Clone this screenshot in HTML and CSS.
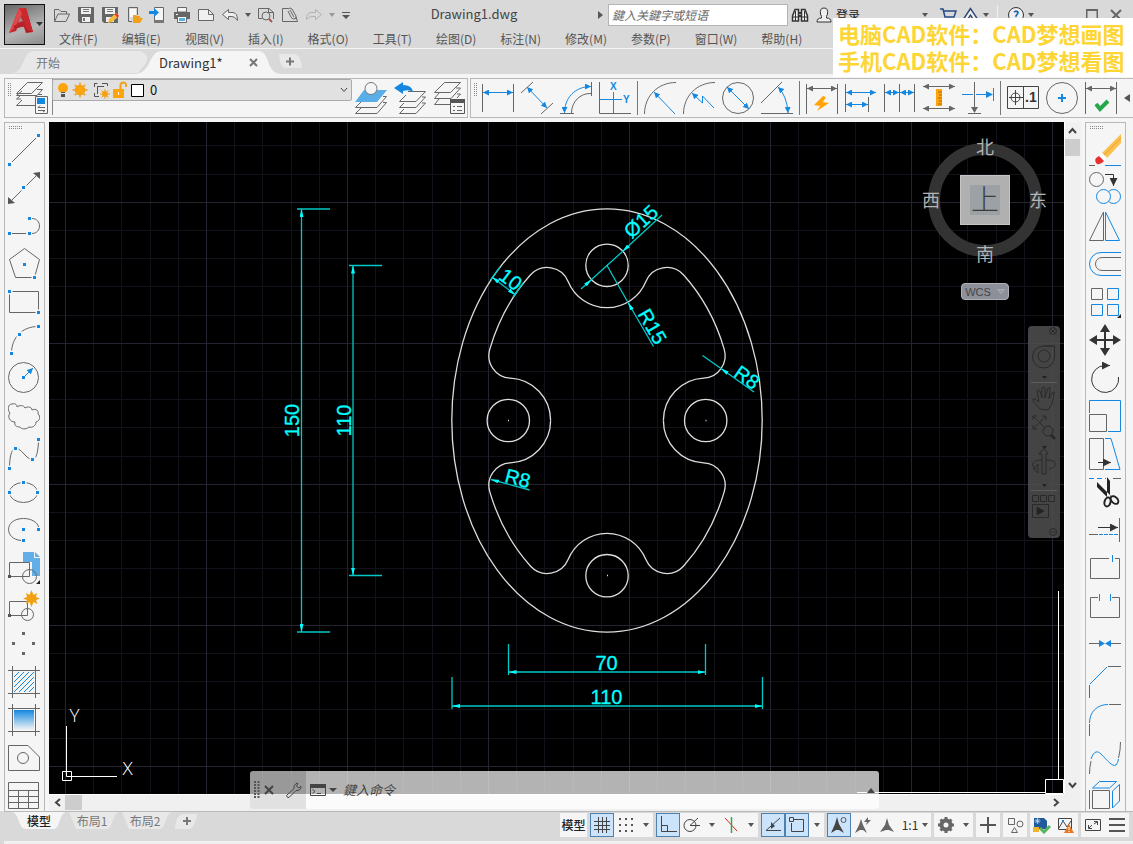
FILE: index.html
```html
<!DOCTYPE html>
<html lang="zh-CN">
<head>
<meta charset="utf-8">
<meta name="viewport" content="width=device-width, initial-scale=1">
<title>Drawing1.dwg</title>
<link rel="stylesheet" href="styles.css">
</head>
<body>
<svg class="defs" aria-hidden="true">
  <defs>
    <marker id="ab" viewBox="0 0 6 6" refX="6" refY="3" markerWidth="6" markerHeight="6" markerUnits="userSpaceOnUse" orient="auto-start-reverse"><path d="M0 0L6 3L0 6z" fill="#1488e0"/></marker>
    <marker id="ag" viewBox="0 0 6 6" refX="6" refY="3" markerWidth="6" markerHeight="6" markerUnits="userSpaceOnUse" orient="auto-start-reverse"><path d="M0 0L6 3L0 6z" fill="#666"/></marker>
    <marker id="ak" viewBox="0 0 8 8" refX="8" refY="4" markerWidth="8" markerHeight="8" markerUnits="userSpaceOnUse" orient="auto-start-reverse"><path d="M0 0L8 4L0 8z" fill="#333"/></marker>
    <marker id="ac" viewBox="0 0 8 4" refX="8" refY="2" markerWidth="8" markerHeight="4" markerUnits="userSpaceOnUse" orient="auto-start-reverse"><path d="M0 0L8 2L0 4z" fill="#0ff"/></marker>
    <linearGradient id="fade" x1="0" y1="0" x2="0" y2="1"><stop offset="0" stop-color="#1488e0"/><stop offset="1" stop-color="#f5f5f5"/></linearGradient>
    <linearGradient id="red" x1="0" y1="0" x2="1" y2="1"><stop offset="0" stop-color="#e0363b"/><stop offset="1" stop-color="#a8161c"/></linearGradient>
    <pattern id="grid" x="65" y="202" width="141" height="141" patternUnits="userSpaceOnUse">
      <path class="minor" d="M28.500 0V141M56.500 0V141M85.500 0V141M113.500 0V141M0 28.500H141M0 56.500H141M0 84.500H141M0 113.500H141"/>
      <path class="major" d="M.500 0V141M0 .500H141"/>
    </pattern>
  </defs>
</svg>

<div class="app">
  <header class="header">
    <button class="logo" aria-label="应用程序菜单">
      <svg width="39" height="39" viewBox="0 0 39 39">
        <path d="M4 28L14 3H21L28 27L21 28L19 22L13 21L11 26Z" fill="url(#red)"/>
        <path d="M14 3L17 9L10 22L4 28Z" fill="#e0484c"/>
        <path d="M8 21L23 15L25 19L10 24Z" fill="#b82328"/>
        <path d="M17 9L21 3L28 27L22 25Z" fill="#c9282d"/>
        <path d="M15.500 12L13 17.500L18 16Z" fill="#9a8a8a"/>
        <path d="M31 17H38L34.500 21Z" fill="#333"/>
      </svg>
    </button>
    <div class="header-rows">
      <div class="title-row">
        <div class="quick">
          <button aria-label="打开"><svg width="18" height="18"><path class="g" d="M1.500 15.500V3.500H6L8 5.500H13.500V8M1.500 15.500L5 8H16.500L13 15.500Z"/></svg></button>
          <button aria-label="保存"><svg width="18" height="18"><path d="M1 1H17V17H3L1 15Z" fill="#666"/><path d="M4 2H14V8H4ZM5 11H13V16H5Z" fill="#eee"/><path d="M6 3H12V4H6ZM6 5H12V6H6ZM6 12H8V15H6Z" fill="#777"/></svg></button>
          <button aria-label="另存为"><svg width="18" height="18"><path d="M1 1H17V17H3L1 15Z" fill="#666"/><path d="M4 2H14V8H4ZM5 11H13V16H5Z" fill="#eee"/><path d="M6 3H12V4H6ZM6 5H12V6H6Z" fill="#777"/><path d="M7 17L8 13L15 7L18 10L11 16Z" fill="#f5b93b"/><path d="M13.500 8.500L15 7L18 10L16.500 11.500Z" fill="#e33"/></svg></button>
          <button aria-label="从云端打开"><svg width="18" height="18"><path class="g" d="M3.500 15.500V1.500H12.500V9M3.500 15.500H7"/><path d="M5 3H11V11H5Z" fill="#f8f8f8"/><path d="M8 17V9H11L12 10H15V12H18L15 17Z" fill="#f0a01a"/></svg></button>
          <button aria-label="保存到云端"><svg width="18" height="18"><path d="M5.500 1.500H14.500V16.500H5.500Z" fill="#f5f5f5" stroke="#666"/><path d="M5 14H15V17H5Z" fill="#777"/><path d="M0 5H5V2L10 6.500L5 11V8H0Z" fill="#1488e0"/></svg></button>
          <button aria-label="打印"><svg width="18" height="18"><path d="M4.500 1.500H13.500V6H4.500Z" fill="#f5f5f5" stroke="#666"/><path d="M1 6H17V13H1Z" fill="#666"/><path d="M3 8H5V9H3Z" fill="#fff"/><path d="M4.500 10.500H13.500V16.500H4.500Z" fill="#fff" stroke="#666"/><path d="M6 12H12V15H6Z" fill="#5aaee8"/></svg></button>
          <button aria-label="新建"><svg width="18" height="18"><path d="M1.500 3.500H11.500L16.500 8.500V14.500H1.500Z" fill="#f0f0f0" stroke="#666"/><path class="g" d="M11.500 3.500V8.500H16.500"/></svg></button>
          <button aria-label="放弃"><svg width="18" height="18"><path d="M1.500 8.500L7.500 3.500V6.500H12Q16.500 7 16.500 14.500Q14 10.500 11 10.500H7.500V13.500Z" fill="#eee" stroke="#666"/></svg></button>
          <button class="thin" aria-label="放弃列表"><i class="caret"></i></button>
          <button aria-label="打印预览"><svg width="18" height="18"><path class="g" d="M1.500 12.500V2.500H12L16.500 6.500V13M1.500 12.500H5M11.500 2.500V6.500H16.500"/><circle class="g" cx="9" cy="10" r="4"/><path d="M12 13L15 16" stroke="#a54" stroke-width="2"/></svg></button>
          <button aria-label="发布"><svg width="18" height="18"><path class="g" d="M7 2.500H1.500V15.500H11M5 15.500H16.500L15 11M7 3Q9 1 11 3L15 10Q16 13 13 13Q11 13 10 11L7 5"/><path class="g" d="M9 4L13 11"/></svg></button>
          <button aria-label="重做" disabled><svg width="18" height="18"><path d="M16.500 8.500L10.500 3.500V6.500H6Q1.500 7 1.500 13.500Q4 10.500 7 10.500H10.500V13.500Z" fill="none" stroke="#b2b2b2"/></svg></button>
          <button class="thin" aria-label="重做列表"><i class="caret pale"></i></button>
          <button class="custom" aria-label="自定义快速访问工具栏"><svg width="10" height="8"><path d="M1 1.500H9" stroke="#555"/><path d="M1 4H9L5 8Z" fill="#555"/></svg></button>
        </div>
        <div class="doc-title">Drawing1.dwg</div>
        <div class="info">
          <button class="expand" aria-label="展开"><svg width="5" height="8"><path d="M0 0L5 4L0 8Z" fill="#555"/></svg></button>
          <input class="search" type="text" aria-label="搜索" placeholder="鍵入关鍵字或短语">
          <button aria-label="查找"><svg width="18" height="16"><path d="M1.500 14V9L4 2.500H7.500V14ZM16.500 14V9L14 2.500H10.500V14Z" fill="#eee" stroke="#333" stroke-width="1.500"/><path d="M7 6H11M7 9H11" stroke="#333" stroke-width="2"/><path d="M2 10H7M11 10H16M4.500 4V14M13.500 4V14" stroke="#333"/></svg></button>
          <button class="signin"><svg width="16" height="16"><path d="M1 15Q1 11 5.500 11Q6 10 4.500 7Q3.500 1 8 1Q12.500 1 11.500 7Q10 10 10.500 11Q15 11 15 15Z" fill="#eee" stroke="#333"/></svg><span>登录</span></button>
          <i class="caret login-caret"></i>
          <button class="cart" aria-label="商店"><svg width="18" height="16"><path d="M1 2H4L6 10H15L17 4H5M6 12H15" fill="none" stroke="#234a86" stroke-width="1.500"/></svg></button>
          <button class="apps" aria-label="应用"><svg width="17" height="16"><path d="M8.500 1.500L1.500 12H6L8.500 8L11 12H15.500Z" fill="#eee" stroke="#29456f" stroke-width="1.400"/></svg></button>
          <i class="caret"></i><i class="bar"></i>
          <button class="help" aria-label="帮助"><span>?</span></button><i class="caret"></i>
          <button class="win" aria-label="最大化"><svg width="12" height="12"><path class="g thick" d="M.500 1H11.500V12H.500Z"/></svg></button>
          <button class="win" aria-label="关闭"><svg width="12" height="12"><path class="g thick" d="M1 1L11 11M11 1L1 11"/></svg></button>
        </div>
      </div>
      <nav class="menu">
        <button>文件(F)</button><button>编辑(E)</button><button>视图(V)</button><button>插入(I)</button><button>格式(O)</button><button>工具(T)</button><button>绘图(D)</button><button>标注(N)</button><button>修改(M)</button><button>参数(P)</button><button>窗口(W)</button><button>帮助(H)</button>
      </nav>
    </div>
  </header>

  <div class="file-tabs">
    <button class="file-tab start"><svg class="tab-shape" viewBox="0 0 136 23" preserveAspectRatio="none"><path d="M0 22C13 22 10 0 22 0H128Q138 3 134 12L126 22Z" fill="#e8e8e8"/></svg><span>开始</span></button>
    <button class="file-tab current"><svg class="tab-shape" viewBox="0 0 148 23" preserveAspectRatio="none"><path d="M0 23C18 23 14 0 28 0H124C137 0 131 23 148 23Z" fill="#f5f5f5"/></svg><span>Drawing1*</span><svg class="tab-close" width="9" height="9"><path d="M1 1L8 8M8 1L1 8" stroke="#777" stroke-width="2"/></svg></button>
    <button class="tab-add" aria-label="新图形"><svg width="24" height="16" viewBox="0 0 24 16"><path d="M1 0H15Q23 0 24 14H7Q2 13 1 0Z" fill="#e8e8e8"/><path d="M8 7.500H16M12 3.500V11.500" stroke="#777" stroke-width="2"/></svg></button>
  </div>

  <div class="toolbars">
    <div class="toolbar layers">
      <i class="grip"></i>
      <button aria-label="图层特性"><svg class="ic"><path class="g" d="M11.500 .500H26.500L15.500 11.500H.500ZM21 7.500H26.500L21 13.500H.500L6 9M22 12.500H26M5 17H.500L4.500 13.500M.500 23.500L6 18M.500 23.500H19"/><path d="M19.500 14.500H31.500V31.500H19.500Z" fill="#f5f5f5" stroke="#666"/><path d="M21 16H29V22H21Z" fill="#1488e0"/><path class="g" d="M22 25.500H29M22 28.500H29M24 23.500L22 25.500M27 30L29 28.500"/></svg></button>
      <div class="layer-col">
        <div class="layer-box">
          <select aria-label="图层"><option>0</option></select>
          <svg class="layer-icons" width="90" height="18" viewBox="0 0 90 18">
            <circle cx="7" cy="7" r="5" fill="#ffa50a"/><path d="M5 11H9V12H5ZM5 13H9V16H5Z" fill="#555"/>
            <g stroke="#f0a01a" stroke-width="1.500"><circle cx="24" cy="9" r="4.500" fill="#ffa50a"/><path d="M24 1.500V4M24 14V16.500M16.500 9H19M29 9H31.500M18.700 3.700L20.500 5.500M27.500 12.500L29.300 14.300M29.300 3.700L27.500 5.500M20.500 12.500L18.700 14.300"/></g>
            <path d="M41.500 2.500H39M38.500 2V6M38.500 12V15.500H43M46 2.500H51.500V5M41.500 5.500H48M41.500 5V13" fill="none" stroke="#555"/><circle cx="49" cy="13" r="3" fill="#ffa50a"/><path d="M49 8V18M44 13H54M45.500 9.500L52.500 16.500M52.500 9.500L45.500 16.500" stroke="#f0a01a"/>
            <path d="M57 8H68V17H57Z" fill="#ffa50a"/><path d="M64.500 8V4.500Q64.500 1.500 67.500 1.500Q70.500 1.500 70 6" fill="none" stroke="#f0a01a" stroke-width="2"/><path d="M62.500 11V14" stroke="#fff"/>
            <path d="M75.500 3.500H87.500V15.500H75.500Z" fill="#fff" stroke="#000"/>
          </svg>
          <svg class="chev" width="8" height="6"><path d="M1 1L4 4.500L7 1" fill="none" stroke="#444"/></svg>
        </div>
      </div>
      <button aria-label="置为当前"><svg class="ic"><path d="M9 8H32L22 20H0Z" fill="#5aaee8"/><circle cx="16" cy="6.500" r="6" fill="#f5f5f5" stroke="#777"/><path class="g" d="M28 14.500H31.500L22 25.500H.500L6 20M28 20.500H31.500L22 31.500H.500L6 26"/></svg></button>
      <button aria-label="上一个图层"><svg class="ic"><path class="g" d="M14 9.500H31.500L22 19.500H5.500L12 13M28 15H31.500L22 25.500H5.500L10 21M28 21H31.500L22 31.500H5.500L10 27"/><path d="M0 6L9 0V3Q18 3 19 10Q15 7 9 9V12Z" fill="#1488e0"/></svg></button>
      <button aria-label="图层状态"><svg class="ic"><path class="g" d="M11.500 .500H27.500L17.500 10.500H1.500ZM23 6H27.500L18 16.500H1.500L6 11M24 12H27.500L24 16M1.500 22.500H17M1.500 22.500L6 17"/><path d="M17.500 17.500H31.500V31.500H17.500Z" fill="#f5f5f5" stroke="#555"/><path d="M17 17H32V21H17Z" fill="#555"/><path class="g" d="M20 24.500H22M24 24.500H29M20 28.500H22M24 28.500H29"/></svg></button>
    </div>
    <div class="toolbar dims">
      <i class="grip"></i>
      <button aria-label="线性"><svg class="ic"><path class="g" d="M.500 2V30M31.500 2V30"/><path class="b" marker-start="url(#ab)" marker-end="url(#ab)" d="M1 10.500H31"/></svg></button>
      <button aria-label="对齐"><svg class="ic"><path class="g" d="M0 11L12 0M20 32L32 21"/><path class="b" marker-start="url(#ab)" marker-end="url(#ab)" d="M6 5L26 26"/></svg></button>
      <button aria-label="弧长"><svg class="ic"><path class="g" d="M11.500 31C11.500 20 20 11 31 11.500M0 31.500H14M31.500 0V14"/><path class="b" marker-start="url(#ab)" marker-end="url(#ab)" d="M4.500 31C4.500 17 14 4.500 31 4.500"/></svg></button>
      <button aria-label="坐标"><svg class="ic"><path class="g" d="M.500 0V31.500H32"/><path class="b" d="M0 17.500H23M14.500 10V31"/><text class="xy" x="11" y="8">X</text><text class="xy" x="24" y="21">Y</text></svg></button>
      <i class="sep"></i>
      <button aria-label="半径"><svg class="ic"><path class="g" d="M.500 32C.500 14 14 .500 32 .500"/><path class="b" marker-start="url(#ab)" d="M10 10L31 32"/></svg></button>
      <button aria-label="折弯"><svg class="ic"><path class="g" d="M.500 32C.500 14 14 .500 32 .500"/><path class="b" marker-start="url(#ab)" d="M9 11L19.500 21V14L31 26"/></svg></button>
      <button aria-label="直径"><svg class="ic"><circle class="g" cx="16" cy="16" r="15.500"/><path class="b" marker-start="url(#ab)" marker-end="url(#ab)" d="M5 5L27 27"/></svg></button>
      <button aria-label="角度"><svg class="ic"><path class="g" d="M0 31.500H32M0 21L21 0"/><path class="b" marker-start="url(#ab)" marker-end="url(#ab)" d="M17 5Q26 14 27 31"/></svg></button>
      <i class="sep"></i>
      <button aria-label="快速标注"><svg class="ic"><path class="g" d="M.500 2V32M31.500 2V32"/><path class="g" marker-start="url(#ag)" marker-end="url(#ag)" d="M1 6.500H31"/><path d="M17 14L8 23L14 24L11 29L23 21L17 20L20 15Z" fill="#ffa50a"/></svg></button>
      <button aria-label="基线"><svg class="ic"><path class="g" d="M.500 2V30M23.500 15V30"/><path class="b" marker-start="url(#ab)" marker-end="url(#ab)" d="M1 10.500H31"/><path class="b" marker-start="url(#ab)" marker-end="url(#ab)" d="M1 22.500H23"/></svg></button>
      <button aria-label="连续"><svg class="ic"><path class="g" d="M.500 2V30M15.500 2V30M30.500 2V30"/><path class="b" marker-start="url(#ab)" marker-end="url(#ab)" d="M1 10.500H15"/><path class="b" marker-start="url(#ab)" marker-end="url(#ab)" d="M16 10.500H30"/></svg></button>
      <button aria-label="间距"><svg class="ic"><path class="g" marker-start="url(#ag)" marker-end="url(#ag)" d="M0 4.500H32"/><path class="g" marker-start="url(#ag)" marker-end="url(#ag)" d="M0 26.500H32"/><path d="M13 7H19V24H13Z" fill="#ffa50a"/><path d="M15 10H19M16 13H19M15 16H19M16 19H19M15 22H19" stroke="#b26b00"/></svg></button>
      <button aria-label="打断标注"><svg class="ic"><path class="g" d="M12.500 0V26M6 31.500H19"/><path d="M9 25H16L12.500 31Z" fill="#666"/><path class="b" d="M0 12.500H11M14 12.500H26M31.500 6V19"/><path d="M24 9L31 12.500L24 16Z" fill="#1488e0"/></svg></button>
      <i class="sep"></i>
      <button aria-label="公差"><svg class="ic"><path d="M.500 4.500H31.500V26.500H.500ZM16.500 4.500V26.500M2 15.500H16M8.500 8V23" fill="none" stroke="#444"/><circle cx="8.500" cy="15.500" r="4.500" fill="none" stroke="#444"/><text class="tol" x="18" y="20">.1</text></svg></button>
      <button aria-label="圆心标记"><svg class="ic"><circle class="g" cx="16" cy="16" r="15.500"/><path d="M12 16H20M16 12V20" stroke="#1488e0" stroke-width="2"/></svg></button>
      <button aria-label="检验"><svg class="ic"><path class="g" d="M.500 0V32M31.500 0V32"/><path class="g" marker-start="url(#ag)" marker-end="url(#ag)" d="M1 6.500H31"/><path d="M11 22L15 27L23 19" fill="none" stroke="#22a84a" stroke-width="4"/></svg></button>
      <button class="more" aria-label="更多"><svg width="6" height="8"><path d="M6 0V8L0 4Z" fill="#555"/></svg></button>
    </div>
  </div>

  <main class="work">
    <aside class="palette" aria-label="绘图">
      <i class="grip wide"></i>
      <button aria-label="直线"><svg class="ic"><path class="g" d="M4 28L28 4"/><path class="bf" d="M0 29H3V32H0ZM29 0H32V3H29Z"/></svg></button>
      <button aria-label="构造线"><svg class="ic"><path class="g" d="M4 28L28 4"/><path d="M0 32V25L7 31ZM32 0V7L25 1Z" fill="#555"/><path class="bf clear" d="M14 14H17V17H14Z"/></svg></button>
      <button aria-label="多段线"><svg class="ic"><path class="g" d="M4 23.500H18M24 8.500C34 8.500 34 23.500 24 23.500"/><path class="bf" d="M0 22H3V25H0ZM20 22H23V25H20ZM20 7H23V10H20Z"/></svg></button>
      <button aria-label="多边形"><svg class="ic"><path class="g" d="M16.500 .500L31.500 11.500L26.500 29.500H7.500L1.500 11.500Z"/><path class="bf clear" d="M15 15H18V18H15ZM25 28H28V31H25Z"/></svg></button>
      <button aria-label="矩形"><svg class="ic"><path class="g" d="M1.500 5.500H30.500V26.500H1.500Z"/><path class="bf clear" d="M0 4H3V7H0ZM29 25H32V28H29Z"/></svg></button>
      <button aria-label="圆弧"><svg class="ic"><path class="g" d="M3.500 29C3.500 14 14 2.500 30 2.500"/><path class="bf clear" d="M2 28H5V31H2ZM10 9H13V12H10ZM29 1H32V4H29Z"/></svg></button>
      <button aria-label="圆"><svg class="ic"><circle class="g" cx="15.500" cy="15.500" r="15"/><path class="b" marker-end="url(#ab)" d="M17 14L25 6"/><path class="bf" d="M14 14H17V17H14Z"/></svg></button>
      <button aria-label="修订云线"><svg class="ic"><path class="g" d="M2 13C-1 10 0 4 4 4C8 3 9 5 9 7C11 5 16 5 17 8C20 6 24 7 24 10C28 8 31 11 30 14C33 16 32 21 28 22C28 26 24 28 21 27C18 30 13 29 12 27C8 27 6 25 7 22C2 22-1 17 2 13Z"/></svg></button>
      <button aria-label="样条曲线"><svg class="ic"><path class="g" d="M1.500 28C2 16 4 10.500 8 10.500C14 10.500 18 21.500 24.500 21.500C29 21 30 12 30.500 4"/><path class="bf clear" d="M0 29H3V32H0ZM6 9H9V12H6ZM23 20H26V23H23ZM29 0H32V3H29Z"/></svg></button>
      <button aria-label="椭圆"><svg class="ic"><ellipse class="g" cx="15.500" cy="16.500" rx="14" ry="10"/><path class="bf clear" d="M14 5H17V8H14ZM0 15H3V18H0ZM28 15H31V18H28Z"/></svg></button>
      <button aria-label="椭圆弧"><svg class="ic"><path class="g" d="M13 26.500C-4 25-4 4.500 15.500 4.500C24 4.500 30 9 30.500 13"/><path class="bf" d="M14 14H17V17H14ZM29 14H32V17H29ZM14 25H17V28H14Z"/></svg></button>
      <button aria-label="插入块"><svg class="ic"><path d="M15 0H26V6H32V24H24V10H15Z" fill="#62aee6"/><path d="M27 0L32 5H27Z" fill="#62aee6"/><path d="M1.500 10.500H21.500V24.500H1.500Z" fill="#f5f5f5" stroke="#666"/><circle class="g" cx="21.500" cy="24.500" r="7"/><path d="M0 23H3V26H0Z" fill="#555"/><path d="M32 28V32H28Z" fill="#222"/></svg></button>
      <button aria-label="创建块"><svg class="ic"><path class="g" d="M1.500 11.500H19.500V25.500H1.500Z"/><circle class="g" cx="19.500" cy="24.500" r="6"/><path d="M0 24H3V27H0Z" fill="#555"/><path d="M23.500 0L25.500 5L29 3L28 7L32 8.500L28 10L29.500 14L25.500 12L23.500 17L21.500 12L18 14L19 10L15 8.500L19 7L18 3L21.500 5Z" fill="#f0a010"/></svg></button>
      <button aria-label="点"><svg class="ic"><path d="M14 4H17V7H14ZM4 14H7V17H4ZM24 14H27V17H24ZM14 24H17V27H14Z" fill="#666"/></svg></button>
      <button aria-label="图案填充"><svg class="ic"><path class="b" d="M6 11L11 6M6 16L16 6M6 21L21 6M6 26L26 6M11 26L26 11M16 26L26 16M21 26L26 21"/><path class="g" d="M0 4.500H32M0 27.500H32M4.500 0V32M27.500 0V32"/></svg></button>
      <button aria-label="渐变色"><svg class="ic"><path d="M6 6H26V26H6Z" fill="url(#fade)"/><path class="g" d="M0 4.500H32M0 27.500H32M4.500 0V32M27.500 0V32"/></svg></button>
      <button aria-label="面域"><svg class="ic"><path class="g" d="M.500 3.500H20L31.500 15V28.500H.500Z"/><circle class="g" cx="15" cy="16" r="5.500"/></svg></button>
      <button aria-label="表格"><svg class="ic"><path class="g" d="M.500 2.500H30.500V28.500H.500ZM.500 10.500H30.500M.500 16.500H30.500M.500 22.500H30.500M10.500 10V28M20.500 10V28"/></svg></button>
    </aside>

    <section class="view">
      <div class="canvas">
        <svg class="drawing" viewBox="49 122 1015 672" preserveAspectRatio="xMidYMid slice" role="img" aria-label="Drawing1">
          <rect x="49" y="122" width="1015" height="672" fill="#000"/>
          <rect x="49" y="122" width="1015" height="672" fill="url(#grid)"/>
          <g class="part" transform="translate(607 420.500)">
            <ellipse rx="155.200" ry="211.600"/>
            <circle cy="-155.200" r="21.200"/><circle cy="155.200" r="21.200"/><circle cx="-98.700" r="21.200"/><circle cx="98.700" r="21.200"/>
            <path id="lobe" d="M0-112.800A42.300 42.300 0 0 0 38.900-139.100A22.600 22.600 0 0 1 76.400-145.700C95.300-124.800 109.200-98.500 117.100-71.600A22.600 22.600 0 0 1 96.600-42.300A42.300 42.300 0 0 0 56.400 0"/>
            <use href="#lobe" transform="scale(-1 1)"/><use href="#lobe" transform="scale(1 -1)"/><use href="#lobe" transform="scale(-1 -1)"/>
            <path d="M0 155h1M-99 0h1M98.500 0h1M0-155h1"/>
          </g>
          <g class="dim">
            <path d="M297 209H330M297 632H330M349 265.500H382M349 575.500H382M508.500 644V675M705.500 644V675M452 677V709M762.500 677V709M490.500 280L500 267M513 297L523 283"/>
            <path marker-start="url(#ac)" marker-end="url(#ac)" d="M301.500 209V632"/><path marker-start="url(#ac)" marker-end="url(#ac)" d="M353 265.500V575.500"/>
            <path marker-start="url(#ac)" marker-end="url(#ac)" d="M508.500 672H705.500"/><path marker-start="url(#ac)" marker-end="url(#ac)" d="M452 706H762.500"/>
            <path marker-start="url(#ac)" marker-end="url(#ac)" d="M492 277L515.500 295"/>
            <path d="M607 265.500L591.500 279.500L622.500 251.500"/>
            <path marker-end="url(#ac)" d="M581 289L591.500 279.500"/><path marker-end="url(#ac)" d="M662 215L622.500 251.500"/>
            <path d="M607 265.500L628 302.500M702.500 355.500L721 368.500"/>
            <path marker-end="url(#ac)" d="M653.500 346.500L628 302.500"/><path marker-end="url(#ac)" d="M754 392L721 368.500"/><path marker-end="url(#ac)" d="M529.500 490L491 479.500"/>
            <text transform="translate(298.500 420.500) rotate(-90)">150</text>
            <text transform="translate(350.500 420.500) rotate(-90)">110</text>
            <text x="606.500" y="669.500">70</text><text x="606.500" y="704">110</text>
            <text transform="translate(645.500 226.500) rotate(-42)">Ø15</text>
            <text transform="translate(646.500 330) rotate(60)">R15</text>
            <text transform="translate(743 383) rotate(35)">R8</text>
            <text transform="translate(516 485) rotate(15)">R8</text>
            <text transform="translate(506.500 285) rotate(37)">10</text>
          </g>
          <g class="ucs"><path d="M66.500 726V776.500H117M62.500 771.500H71.500V780.500H62.500Z"/><text x="74.500" y="722">Y</text><text x="127.500" y="775">X</text></g>
          <path class="cursor" d="M1058.500 591V779M857 792.500H1045M1045.500 779.500H1063.500V793.500H1045.500Z"/>
        </svg>

        <div class="cube">
          <svg width="114" height="114" viewBox="0 0 114 114"><circle cx="57" cy="57" r="51" fill="none" stroke="#333" stroke-width="12"/></svg>
          <button class="face">上</button>
          <span class="dir n">北</span><span class="dir w">西</span><span class="dir e">东</span><span class="dir s">南</span>
        </div>
        <button class="wcs">WCS <svg width="8" height="5"><path d="M.500 .500H7.500L4 4.500Z" fill="#999ba3" stroke="#aaacb2"/></svg></button>

        <div class="navbar">
          <svg width="32" height="212" viewBox="0 0 32 212" fill="none" stroke="#2a2a2a">
            <circle cx="25" cy="5" r="3.500"/><path d="M23 3L27 7M27 3L23 7"/>
            <path d="M26.500 20V31A11 11 0 1 1 16 20ZM16 20H26"/><circle cx="16" cy="30" r="6"/>
            <path d="M14 50H19L16.500 53ZM14 120H19L16.500 123ZM14 158H19L16.500 161Z" fill="#222" stroke="none"/>
            <path d="M3 56.500H29M3 164.500H29" stroke="#5c5c5c"/>
            <path d="M12 83L5 75Q4 72 7 73L11 76L9 65Q10 63 12 65L14 72L14 62Q16 60 17 62L17 72L20 62Q22 61 22 63L21 73L25 66Q27 65 26 68L24 78L20 84Z"/>
            <path d="M5 90L18 103M5 103L18 90M5 94V90H9M18 94V90H14M5 99V103H9"/><circle cx="20" cy="105" r="5"/><path d="M23 109L27 113" stroke-width="3"/>
            <path d="M14 134V128H11L16 122L20 128H18V148H14ZM14 134C2 134 3 142 9 143M18 134C30 134 30 141 21 143M5 143L10 138V147Z"/>
            <path d="M4.500 169.500H10.500V175.500H4.500ZM12.500 169.500H18.500V175.500H12.500ZM20.500 169.500H26.500V175.500H20.500ZM4.500 178.500H20.500V191.500H4.500Z"/><path d="M9 181L16 185L9 189Z" fill="#222"/>
            <circle cx="25" cy="206" r="3.500"/><path d="M23 206H27"/>
          </svg>
        </div>
      </div>
      <div class="vscroll"><button aria-label="向上"><svg width="9" height="7"><path class="k" d="M1 6L4.500 2L8 6"/></svg></button><i class="thumb"></i><button class="last" aria-label="向下"><svg width="9" height="7"><path class="k" d="M1 1L4.500 5L8 1"/></svg></button></div>
      <div class="hscroll"><button aria-label="向左"><svg width="7" height="9"><path class="k" d="M6 1L2 4.500L6 8"/></svg></button><i class="thumb"></i><button class="last" aria-label="向右"><svg width="7" height="9"><path class="k" d="M1 1L5 4.500L1 8"/></svg></button></div>
      <div class="corner"></div>
      <div class="command">
        <div class="cmd-tools">
          <svg width="6" height="18"><path d="M1 0V18M4.500 0V18" stroke="#555" stroke-width="2" stroke-dasharray="2 1"/></svg>
          <button aria-label="关闭命令行"><svg width="10" height="10"><path d="M1 1L9 9M9 1L1 9" stroke="#444" stroke-width="2"/></svg></button>
          <button aria-label="自定义"><svg width="17" height="17"><path d="M1.500 13.500L9 6.500Q8 3 12 1L13 1.500L11.500 4L13.500 6L16 4.500Q16 9 11 8.500L4 15.500Q2 16 1.500 13.500Z" fill="none" stroke="#444"/></svg></button>
        </div>
        <label class="cmd-entry">
          <svg width="28" height="13"><path d="M.500 1.500H15.500V11.500H.500Z" fill="none" stroke="#444"/><path d="M0 0H16V4H0Z" fill="#444"/><path d="M2.500 5.500L5 7.500L2.500 9.500M7 9.500H11" fill="none" stroke="#444"/><path d="M19 4H27L23 8Z" fill="#444"/></svg>
          <input type="text" aria-label="命令" placeholder="鍵入命令">
          <svg class="cmd-up" width="8" height="5"><path d="M0 5H8L4 0Z" fill="#444"/></svg>
        </label>
      </div>
    </section>

    <aside class="palette right" aria-label="修改">
      <i class="grip wide"></i>
      <button aria-label="删除"><svg class="ic"><path d="M13 19L32 0V9L18 24Z" fill="#fbc04e"/><path d="M15 21L32 4" stroke="#e8a32c"/><path d="M10 22L13 19L18 24L15 27Z" fill="#fff"/><path d="M10 22L15 27Q12 31 8 30Q5 27 7 24Z" fill="#e93030"/><path class="g" d="M0 31.500H6"/><path class="b" d="M16 31.500H32"/></svg></button>
      <button aria-label="复制"><svg class="ic"><circle class="g" cx="7.500" cy="7.500" r="7"/><path d="M16 2.500H24.500V14" fill="none" stroke="#333" marker-end="url(#ak)"/><circle class="b" cx="24.500" cy="24.500" r="7"/><circle cx="14.500" cy="24.500" r="7" fill="#f5f5f5" stroke="#1488e0"/></svg></button>
      <button aria-label="镜像"><svg class="ic"><path class="g" d="M14.500 2V30.500H.500Z"/><path class="b" d="M16.500 2V30.500H30.500Z"/></svg></button>
      <button aria-label="偏移"><svg class="ic"><path class="b" d="M32 4.500H12A11.500 11.500 0 0 0 12 27.500H32"/><path class="g" d="M32 9.500H13A6.500 6.500 0 0 0 13 22.500H32"/></svg></button>
      <button aria-label="阵列"><svg class="ic"><path class="g" d="M2.500 2.500H13.500V13.500H2.500Z"/><path class="b" d="M18.500 2.500H29.500V13.500H18.500ZM2.500 18.500H13.500V29.500H2.500ZM18.500 18.500H29.500V29.500H18.500Z"/><path d="M32 28V32H28Z" fill="#222"/></svg></button>
      <button aria-label="移动"><svg class="ic"><path d="M4 16H28M16 4V28" stroke="#333" stroke-width="2"/><path d="M16 0L21 8H11ZM16 32L21 24H11ZM0 16L8 11V21ZM32 16L24 11V21Z" fill="#333"/></svg></button>
      <button aria-label="旋转"><svg class="ic"><path d="M29.500 15A13.500 13.500 0 1 1 16 3.500H21" fill="none" stroke="#333" marker-end="url(#ak)"/></svg></button>
      <button aria-label="缩放"><svg class="ic"><path class="b" d="M.500 13V.500H31.500V31.500H19"/><path class="g" d="M.500 14.500H17.500V31.500H.500Z"/></svg></button>
      <button aria-label="拉伸"><svg class="ic"><path class="g" d="M.500 .500H14.500V31.500H.500Z"/><path class="b" d="M16 .500H22L31 31.500H16"/><path d="M9 24.500H22" stroke="#333" marker-end="url(#ak)"/></svg></button>
      <button aria-label="修剪"><svg class="ic"><path class="b" stroke-dasharray="5 3" d="M0 2.500H17"/><path class="g" d="M24 2.500H32"/><path d="M8 6L8 11L18 21L22 20ZM18 1L21 5V20L18 21Z" fill="#222"/><g fill="none" stroke="#222" stroke-width="2"><ellipse cx="18.500" cy="26" rx="3" ry="4.500" transform="rotate(15 18.500 26)"/><ellipse cx="25.500" cy="24" rx="3" ry="4.500" transform="rotate(-45 25.500 24)"/></g></svg></button>
      <button aria-label="延伸"><svg class="ic"><path d="M9 13.500H29" stroke="#333" marker-end="url(#ak)"/><path class="g" d="M0 20.500H9M30.500 4V28"/><path class="b" stroke-dasharray="4 1" d="M10 20.500H29"/></svg></button>
      <button aria-label="打断于点"><svg class="ic"><path class="g" d="M20 6.500H1.500V26.500H30.500V6.500H26"/><path class="b" d="M23.500 3V10"/></svg></button>
      <button aria-label="打断"><svg class="ic"><path class="g" d="M9 7.500H1.500V27.500H30.500V7.500H23"/><path class="b" d="M10.500 4V11M21.500 4V11"/></svg></button>
      <button aria-label="合并"><svg class="ic"><path class="g" d="M0 15.500H10M22 15.500H32"/><path class="bf" d="M10 12L16 15.500L10 19ZM22 12L16 15.500L22 19Z"/></svg></button>
      <button aria-label="倒角"><svg class="ic"><path class="g" d="M.500 32V19M19 .500H32"/><path class="b" d="M1 18L18 1"/></svg></button>
      <button aria-label="圆角"><svg class="ic"><path class="g" d="M.500 32V20M20 .500H32"/><path class="b" d="M.500 19C.500 8 8 .500 19 .500"/></svg></button>
      <button aria-label="光顺曲线"><svg class="ic"><path class="g" d="M.500 32Q.500 26 2 19M31.500 0Q31.500 8 29.500 16"/><path class="b" d="M2 17C5 8 9 9 12 12C18 18 23 25 27 23Q29 21 29.500 17"/></svg></button>
      <button aria-label="三维"><svg class="ic"><path class="g" d="M3.500 10.500H20.500V28.500H3.500Z"/><path class="b" d="M.500 10V29M3.500 8L10.500 1.500H27.500L20.500 8ZM23.500 11L30.500 4.500V21L23.500 28Z"/></svg></button>
    </aside>
  </main>

  <footer class="status">
    <div class="layout-tabs">
      <button class="lt on"><svg class="tab-shape" viewBox="0 0 54 18" preserveAspectRatio="none"><path d="M0 0H54C47 2 48 18 42 18H14C6 18 8 2 0 0Z" fill="#f5f5f5"/></svg><span>模型</span></button>
      <button class="lt"><svg class="tab-shape" viewBox="0 0 54 18" preserveAspectRatio="none"><path d="M4 0H54C47 2 48 18 42 18H11Z" fill="#e8e8e8"/></svg><span>布局1</span></button>
      <button class="lt"><svg class="tab-shape" viewBox="0 0 54 18" preserveAspectRatio="none"><path d="M4 0H54C47 2 48 18 42 18H11Z" fill="#e8e8e8"/></svg><span>布局2</span></button>
      <button class="lt add" aria-label="新建布局"><svg width="24" height="16" viewBox="0 0 24 16"><path d="M0 16Q1 2 8 1H22Q20 14 15 16Z" fill="#e8e8e8"/><path d="M8 8H16M12 4V12" stroke="#777" stroke-width="2"/></svg></button>
    </div>
    <div class="controls">
      <div class="grp"><button class="space">模型</button></div>
      <div class="grp"><button class="on" aria-label="栅格"><svg width="16" height="16"><path class="k1" d="M4.500 0V16M8.500 0V16M12.500 0V16M0 4.500H16M0 8.500H16M0 12.500H16"/></svg></button><button aria-label="捕捉"><svg width="14" height="14"><path d="M1 0V14M7 0V14M13 0V14" stroke="#555" stroke-width="2" stroke-dasharray="2 4"/></svg></button><button class="drop" aria-label="捕捉设置"><i class="caret"></i></button></div>
      <div class="grp"><button class="on" aria-label="正交"><svg width="18" height="18"><path class="k1" d="M2.500 0V15.500H18M2.500 9.500H8.500V15.500"/></svg></button><button aria-label="极轴"><svg width="18" height="16"><circle class="k1" cx="7" cy="8.500" r="6"/><path class="k1" d="M7 8.500L15 1M7 8.500H17"/></svg></button><button class="drop" aria-label="极轴设置"><i class="caret"></i></button><button aria-label="等轴测"><svg width="14" height="16"><path d="M1 1L13 14" stroke="#d22"/><path d="M7.500 0V16" stroke="#3a4" stroke-width="1.500"/></svg></button><button class="drop" aria-label="等轴测设置"><i class="caret"></i></button></div>
      <div class="grp"><button class="on" aria-label="对象追踪"><svg width="18" height="16"><path class="k1" d="M16 1L2 13.500H17"/><path d="M7 5L11 9L7 12Z" fill="#444"/></svg></button><button class="on" aria-label="对象捕捉"><svg width="18" height="18"><path class="k1" d="M6 3.500H15.500V15.500H3.500V7M1.500 1.500H5.500V5.500H1.500Z"/></svg></button><button class="drop" aria-label="捕捉列表"><i class="caret"></i></button></div>
      <div class="grp"><button class="on" aria-label="注释可见性"><svg width="18" height="18"><path d="M7 1L9 8L14 17L9 14H6L1 17L5 8Z" fill="#444"/><circle cx="13.500" cy="4" r="2.500" fill="none" stroke="#555"/></svg></button><button aria-label="自动缩放"><svg width="18" height="18"><path d="M7 3L9 9L13 17L9 14H6L1 17L5 9Z" fill="#666"/><path d="M14 1L10 6H13L12 9L17 4H14Z" fill="#666"/></svg></button><button aria-label="注释"><svg width="16" height="18"><path d="M8 2L10 9L15 16L10 14H7L1 16L6 9Z" fill="#666"/></svg></button><button class="scale"><span>1:1</span><i class="caret"></i></button></div>
      <div class="grp"><button aria-label="切换工作空间"><svg width="16" height="16"><circle cx="8" cy="8" r="4.500" fill="none" stroke="#666" stroke-width="4"/><path d="M8 0V3M8 13V16M0 8H3M13 8H16M2.500 2.500L4.500 4.500M11.500 11.500L13.500 13.500M13.500 2.500L11.500 4.500M2.500 13.500L4.500 11.500" stroke="#666" stroke-width="3"/></svg></button><button class="drop" aria-label="工作空间列表"><i class="caret"></i></button></div>
      <div class="grp"><button aria-label="注释监视器"><svg width="16" height="16"><path d="M8 0V16M0 8H16" stroke="#555" stroke-width="2"/></svg></button></div>
      <div class="grp"><button aria-label="隔离对象"><svg width="17" height="17"><path class="g" d="M1.500 1.500H7.500V7.500H1.500ZM4.500 15.500L7.500 10.500L10.500 15.500Z"/><circle class="g" cx="13" cy="7" r="3"/></svg></button></div>
      <div class="grp"><button aria-label="硬件加速"><svg width="18" height="17"><path d="M1 1H11L14 4V12H1Z" fill="#205a9c"/><path d="M0 10H6V15H0Z" fill="#f3b32b"/><path d="M4.500 1V7M1.500 4H7.500M2.500 2L6.500 6M6.500 2L2.500 6" stroke="#dfe9f5" stroke-width=".700"/><path d="M7 11L11 15L17 9" fill="none" stroke="#58b35f" stroke-width="3"/></svg></button><button aria-label="图形监视"><svg width="18" height="17"><path class="k1" d="M1.500 1.500H14.500V12.500H1.500ZM2 11L6 4L10 10L14 4"/><path d="M5 3H7V5H5Z" fill="#1488e0"/><path d="M12 7L17 16H7Z" fill="#e87722"/><path d="M12 10V13M12 14V15" stroke="#fff"/></svg></button></div>
      <div class="grp"><button aria-label="全屏"><svg width="17" height="14"><path class="k1" d="M.500 1.500H15.500V12.500H.500ZM4 10L7 7M9 6L12 4M9 3.500H12.500V7M3.500 7V10.500H7"/></svg></button><button aria-label="自定义"><svg width="16" height="15"><path d="M0 1H16M0 7H16M0 13H16" stroke="#555" stroke-width="2"/></svg></button></div>
    </div>
  </footer>

  <div class="promo"><p>电脑CAD软件：CAD梦想画图</p><p>手机CAD软件：CAD梦想看图</p></div>
</div>
</body>
</html>
```
FILE: styles.css
```css
* { box-sizing: border-box; }

body {
  margin: 0;
  background: #d9d9d9;
  color: #444;
  font: 12px/16px "Noto Sans CJK SC", sans-serif;
}

button, input, select { font: inherit; color: inherit; }
button {
  display: flex;
  align-items: center;
  justify-content: center;
  flex: none;
  padding: 0;
  border: 0;
  background: none;
}
svg { display: block; flex: none; }
.defs { position: absolute; width: 0; height: 0; }

/* icon strokes */
.ic { width: 32px; height: 32px; }
.g { fill: none; stroke: #666; }
.b { fill: none; stroke: #1488e0; }
.bf { fill: #1488e0; }
.clear { stroke: #f5f5f5; stroke-width: 3; paint-order: stroke; }
.thick { stroke-width: 2; }
.k { fill: none; stroke: #444; stroke-width: 2; }
.k1 { fill: none; stroke: #444; }
.xy { font: 700 10px/10px "Liberation Sans", sans-serif; fill: #1488e0; }
.tol { font: 700 14px "Liberation Sans", sans-serif; fill: #333; }
.caret {
  flex: none;
  border: 3px solid transparent;
  border-top: 4px solid #555;
  border-bottom: 0;
}
.pale { border-top-color: #999; }

.app {
  position: relative;
  display: flex;
  flex-direction: column;
  height: 100vh;
  overflow: hidden;
}

/* header */
.header { display: flex; flex: none; height: 49px; border-bottom: 1px solid #f5f5f5; }
.logo {
  width: 41px;
  height: 41px;
  margin: 4px 5px 0 4px;
  border: 1px solid #111;
  background: linear-gradient(160deg, #666, #b5b5b5 60%, #8c8c8c);
}
.header-rows { flex: 1; min-width: 0; }
.title-row { display: flex; align-items: center; height: 30px; }
.quick { display: flex; align-items: center; }
.quick button { width: 24px; height: 24px; }
.quick .thin { width: 12px; }
.quick .custom { width: 16px; }
.doc-title { flex: 1; padding-bottom: 2px; text-align: center; font-size: 13px; white-space: nowrap; }
.info { display: flex; align-items: center; height: 30px; padding-right: 5px; }
.info button { height: 24px; width: 24px; }
.info .expand { width: 14px; }
.search {
  width: 180px;
  height: 22px;
  padding: 0 3px 2px;
  border: 1px solid #b4b4b4;
  background: #fff;
  font-style: italic;
}
.search::placeholder { color: #666; opacity: 1; }
.info .signin { width: auto; gap: 4px; padding-left: 4px; color: #222; }
.login-caret { margin: 0 8px 0 62px; }
.info .apps { width: 20px; margin-right: 3px; }
.bar { width: 1px; height: 20px; margin: 0 6px 0 8px; background: #f0f0f0; }
.help span {
  width: 16px;
  height: 16px;
  border: 1px solid #333;
  border-radius: 50%;
  background: #eee;
  color: #0b5cad;
  font-weight: 700;
  line-height: 14px;
}
.help + .caret { margin-right: 46px; }
.menu { display: flex; gap: 24px; padding-left: 9px; }
.menu button { height: 17px; color: #555; }

/* drawing tabs */
.file-tabs { display: flex; flex: none; align-items: flex-end; height: 25px; padding-left: 12px; }
.file-tab { position: relative; height: 23px; color: #777; }
.tab-shape { position: absolute; inset: 0; width: 100%; height: 100%; }
.file-tab span, .lt span { position: relative; }
.start { width: 136px; justify-content: flex-start; padding-left: 24px; }
.current { width: 148px; margin-left: -14px; padding: 0 24px 0 25px; justify-content: space-between; color: #333; font-size: 13px; }
.tab-close { position: relative; }
.tab-add { height: 22px; margin: 0 0 1px -4px; }

/* toolbars */
.toolbars { display: flex; flex: none; gap: 2px; height: 48px; padding: 4px 0 4px 4px; background: #f5f5f5; }
.toolbar { display: flex; align-items: flex-start; padding: 3px 0 0 2px; border: 1px solid #b8b8b8; }
.layers { width: 464px; flex: none; }
.dims { flex: 1; min-width: 0; border-right: 0; }
.grip {
  flex: none;
  width: 4px;
  height: 14px;
  margin: 1px 5px 0 0;
  background: conic-gradient(#888 25%, transparent 0) 0 0 / 2px 2px;
}
.layers button { margin-right: 7px; }
.layers > .grip + button { margin-right: 4px; }
.layer-col { flex: 1; height: 36px; margin: -3px 3px 0 0; border-left: 1px solid #888; }
.layer-box { position: relative; margin-left: -1px; }
.layer-box select {
  display: block;
  width: 100%;
  height: 22px;
  padding: 0 0 0 97px;
  border: 1px solid #aaa;
  border-radius: 2px;
  background: #e1e1e1;
  color: #111;
  font-size: 13px;
  appearance: none;
}
.layer-icons { position: absolute; left: 4px; top: 2px; }
.chev { position: absolute; right: 4px; top: 8px; }
.layers button:last-child { margin-right: 2px; }
.dims button { margin-right: 7px; }
.sep { flex: none; width: 1px; height: 34px; margin: -1px 6px 0 -1px; background: #777; }
.dims .more { height: 32px; margin-right: 0; }

/* work area */
.work { display: flex; flex: 1; min-height: 0; padding: 0 7px 0 4px; background: #f5f5f5; }
.palette {
  display: flex;
  flex-direction: column;
  align-items: flex-start;
  flex: none;
  gap: 6px;
  width: 41px;
  padding: 3px 0 0 3px;
  border: 1px solid #b8b8b8;
  border-bottom: 0;
  overflow: hidden;
}
.grip.wide { width: 14px; height: 4px; margin: 0 0 -2px; }
.view {
  position: relative;
  display: grid;
  grid-template: minmax(0, 1fr) 17px / minmax(0, 1fr) 17px;
  flex: 1;
  min-width: 0;
  margin: 0 4px;
}
.canvas { position: relative; overflow: hidden; background: #000; }
.drawing { width: 100%; height: 100%; }
.minor { fill: none; stroke: #12121a; }
.major { fill: none; stroke: #242430; }
.part { fill: none; stroke: #ddd; stroke-width: 1.3; }
.dim { fill: none; stroke: #00c8c8; stroke-width: 1.3; }
.dim text {
  fill: #0ff;
  stroke: #0ff;
  stroke-width: .3;
  font: 20px "Liberation Sans", Arial, sans-serif;
  text-anchor: middle;
}
.ucs { fill: none; stroke: #fff; }
.ucs text { fill: #fff; stroke: none; font: 300 19px "Open Sans", sans-serif; text-anchor: middle; }
.cursor { fill: none; stroke: #fff; }

.vscroll, .hscroll { display: flex; background: #f0f0f0; }
.vscroll { flex-direction: column; align-items: flex-start; border-left: 1px solid #fff; }
.hscroll { border-top: 1px solid #fff; }
.corner { background: #f0f0f0; }
.vscroll button { width: 15px; height: 17px; }
.hscroll button { width: 16px; height: 15px; }
.vscroll .thumb { width: 15px; height: 17px; background: #cdcdcd; }
.hscroll .thumb { width: 17px; height: 15px; background: #cdcdcd; }
.vscroll .last { margin-top: auto; }
.hscroll .last { margin-left: auto; }

/* canvas overlays */
.cube { position: absolute; right: 22px; top: 21px; }
.face {
  position: absolute;
  left: 32px;
  top: 32px;
  width: 50px;
  height: 50px;
  border: 1px solid #c4c4c4;
  background: linear-gradient(#9ba1a4, #9ba1a4) center / 30px 30px no-repeat #b0b0b0;
  color: #3c3c3c;
  font: 300 28px/28px "Noto Sans CJK SC", sans-serif;
  padding-bottom: 4px;
}
.dir { position: absolute; color: #b4b4b4; font: 18px/18px "Noto Sans CJK SC", sans-serif; }
.n { left: 48px; top: -6px; }
.s { left: 48px; top: 101px; }
.w { left: -6px; top: 47px; }
.e { right: -5px; top: 47px; }
.wcs {
  position: absolute;
  right: 55px;
  top: 161px;
  gap: 6px;
  width: 48px;
  height: 17px;
  border: 1px solid #b0b0b8;
  border-radius: 4px;
  background: #8e9099;
  color: #444;
  font: 11px/14px "Liberation Sans", sans-serif;
}
.navbar {
  position: absolute;
  right: 4px;
  top: 204px;
  border-radius: 4px;
  background: rgba(80, 80, 80, .85);
}
.command {
  position: absolute;
  left: 201px;
  bottom: 2px;
  display: flex;
  width: min(629px, 70%);
  height: 38px;
  border-radius: 3px;
  overflow: hidden;
}
.cmd-tools {
  display: flex;
  align-items: center;
  gap: 8px;
  width: 56px;
  padding-left: 4px;
  background: rgba(218, 218, 218, .7);
}
.cmd-tools button + button { margin-left: 3px; }
.cmd-tools button:first-of-type { margin-left: -4px; }
.cmd-entry {
  display: flex;
  flex: 1;
  align-items: center;
  gap: 5px;
  padding: 0 4px;
  background: rgba(255, 255, 255, .7);
}
.cmd-entry input { flex: 1; min-width: 0; padding: 0; border: 0; background: none; font-size: 13px; font-style: italic; }
.cmd-entry input::placeholder { color: #444; opacity: 1; }

/* status bar */
.status {
  display: flex;
  flex: none;
  justify-content: space-between;
  height: 33px;
  margin-left: 4px;
  border-top: 1px solid #b8b8b8;
  border-bottom: 3px solid #f0f0f0;
}
.layout-tabs { display: flex; padding-left: 8px; }
.lt { position: relative; width: 54px; height: 17px; margin-right: -1px; color: #777; }
.lt.on { color: #222; font-weight: 500; }
.lt.add { width: 24px; margin-left: 4px; }
.controls { display: flex; gap: 3px; padding: 1px 4px 0 0; }
.grp { display: flex; height: 24px; background: #f5f5f5; }
.grp button { width: 24px; height: 24px; }
.grp .on { border: 1px solid #4f81b0; background: #cce4fb; }
.grp .drop { width: 15px; }
.grp .space { width: 27px; color: #222; font-weight: 500; }
.grp .scale { width: 32px; gap: 4px; color: #333; }

.promo {
  position: absolute;
  right: 0;
  top: 18px;
  width: 300px;
  height: 59px;
  padding: 2px 0 0 5px;
  background: #fff;
  color: #fdd535;
  font: 700 22px/27px "Noto Sans CJK SC", sans-serif;
  white-space: nowrap;
}
.promo p { margin: 0; }
```
